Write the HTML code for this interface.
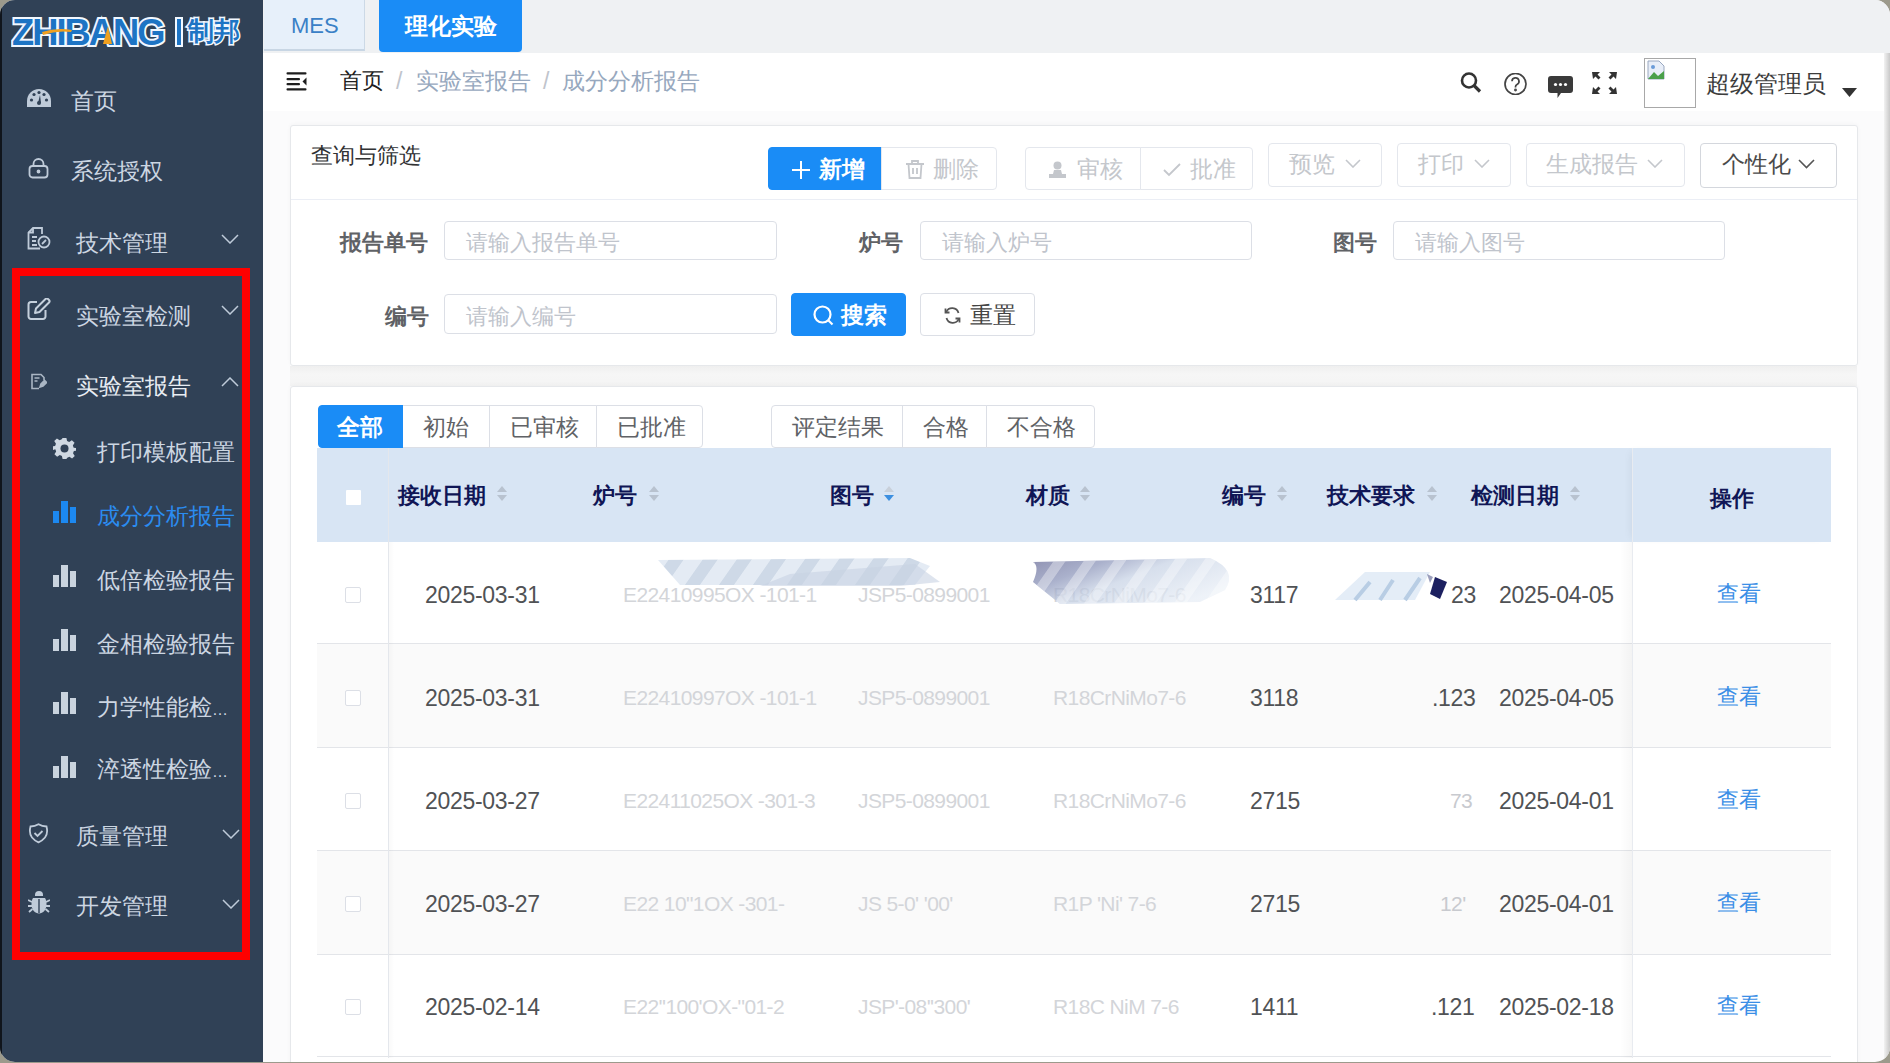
<!DOCTYPE html>
<html><head><meta charset="utf-8">
<style>
*{box-sizing:border-box;margin:0;padding:0}
html,body{width:1890px;height:1063px;overflow:hidden;background:#9c9a8c;font-family:"Liberation Sans",sans-serif;line-height:1}
.a{position:absolute;white-space:nowrap}
#win{position:absolute;left:0;top:0;width:1890px;height:1062px;border-radius:15px;overflow:hidden;background:#fbfbfc}
#side{position:absolute;left:0;top:0;width:263px;height:1063px;background:#304156}
.mi{position:absolute;font-size:23px;color:#ccd6e2;line-height:1;font-weight:500}
.ic{position:absolute}
#topbar{position:absolute;left:263px;top:0;width:1627px;height:53px;background:#eff1f3}
#hdr{position:absolute;left:263px;top:53px;width:1627px;height:58px;background:#fff}
.card{position:absolute;background:#fff;border:1px solid #e6e8eb;border-radius:3px;box-shadow:0 -1px 4px rgba(0,0,0,.03)}
.btn{position:absolute;border:1px solid #e4e7ed;background:#fff;color:#c0c4cc;font-size:22px;line-height:1}
.lbl{position:absolute;font-size:22px;font-weight:bold;color:#606266}
.inp{position:absolute;border:1px solid #dcdfe6;border-radius:4px;background:#fff}
.ph{position:absolute;font-size:22px;color:#c0c4cc}
.tab{position:absolute;top:405px;height:43px;border:1px solid #dcdfe6;background:#fff;font-size:22.5px;color:#606266}
.th{position:absolute;margin-top:2px;font-size:22px;font-weight:bold;color:#101656}
.td{position:absolute;font-size:23px;letter-spacing:-0.3px;color:#505255}
.tb{position:absolute;font-size:21px;letter-spacing:-0.6px;color:#d3d5d9}
.cb{position:absolute;width:16px;height:16px;border:1px solid #dcdfe6;border-radius:2px;background:#fff}
.row{position:absolute;left:317px;width:1514px;border-bottom:1px solid #e3e5e9}
.view{position:absolute;font-size:22px;color:#3a8ee6}
</style></head><body>
<div id="win">
  <!-- sidebar -->
  <div id="side">
    <div class="a" style="left:0;top:0;width:2px;height:1063px;background:#10151c"></div>
    <!-- logo -->
    <div class="a" id="logo" style="left:12px;top:14px;height:34px;">
      <span style="position:absolute;left:0;top:0;font-size:37px;font-weight:bold;color:#1d74c4;-webkit-text-stroke:4px #f2f8ff;paint-order:stroke fill;letter-spacing:-2px;transform:scaleX(0.98);transform-origin:0 0;font-family:'Liberation Sans Narrow','Liberation Sans',sans-serif">ZHIBANG</span>
      <span style="position:absolute;left:165px;top:5px;width:4px;height:26px;background:#1d74c4;outline:2px solid #f2f8ff"></span>
      <span style="position:absolute;left:176px;top:4px;font-size:26px;font-weight:900;color:#1d74c4;-webkit-text-stroke:3px #f2f8ff;paint-order:stroke fill">制邦</span>
      <svg style="position:absolute;left:88px;top:12px" width="12" height="18" viewBox="0 0 12 18"><path d="M8 0 L12 18 L3 18Z" fill="#f0a020"/></svg>
      <svg style="position:absolute;left:30px;top:13px" width="30" height="8" viewBox="0 0 30 8"><path d="M0 5 Q15 0 30 3 L29 5 Q15 3 1 8Z" fill="#f0a020"/></svg>
    </div>
    <!-- menu -->
    <svg class="ic" style="left:27px;top:89px" width="24" height="18" viewBox="0 0 24 18"><path d="M12 0C5.4 0 0 5.4 0 12v6h24v-6C24 5.4 18.6 0 12 0z" fill="#bfcbd9"/><circle cx="4.5" cy="11" r="1.6" fill="#304156"/><circle cx="7" cy="5.5" r="1.6" fill="#304156"/><circle cx="12" cy="3.5" r="1.6" fill="#304156"/><circle cx="17" cy="5.5" r="1.6" fill="#304156"/><circle cx="19.5" cy="11" r="1.6" fill="#304156"/><path d="M11 14l2-8 1 8z" fill="#304156"/><circle cx="12" cy="14" r="2" fill="#304156"/></svg>
    <div class="mi" style="left:71px;top:90px">首页</div>
    <svg class="ic" style="left:28px;top:158px" width="21" height="21" viewBox="0 0 21 21" fill="none" stroke="#bfcbd9" stroke-width="1.8"><path d="M5.5 8V6a5 5 0 0 1 10 0v2"/><rect x="1.5" y="8" width="18" height="11.5" rx="3"/><circle cx="10.5" cy="13.5" r="1" fill="#bfcbd9"/></svg>
    <div class="mi" style="left:71px;top:160px">系统授权</div>
    <svg class="ic" style="left:27px;top:227px" width="24" height="23" viewBox="0 0 24 23" fill="none" stroke="#bfcbd9" stroke-width="1.8"><path d="M13 21.5H1.5V5.5L6 1h9v6"/><path d="M6 1v4.5H1.5"/><path d="M5 10h5M5 14h4M5 18h5"/><circle cx="17" cy="15" r="5.5"/><path d="M15 17l4-4"/></svg>
    <div class="mi" style="left:76px;top:232px">技术管理</div>
    <svg class="ic" style="left:221px;top:234px" width="18" height="10" viewBox="0 0 18 10" fill="none" stroke="#bfcbd9" stroke-width="1.5"><path d="M1 1l8 8 8-8"/></svg>

    <svg class="ic" style="left:27px;top:298px" width="24" height="23" viewBox="0 0 24 23" fill="none" stroke="#c5d0dc" stroke-width="2" stroke-linejoin="round"><path d="M10 4H4a2.5 2.5 0 0 0-2.5 2.5v12A2.5 2.5 0 0 0 4 21h12a2.5 2.5 0 0 0 2.5-2.5V12"/><path d="M8 15l1-4.5L18.5 1a1.8 1.8 0 0 1 2.5 0l1 1a1.8 1.8 0 0 1 0 2.5L12.5 14z"/></svg>
    <div class="mi" style="left:76px;top:305px">实验室检测</div>
    <svg class="ic" style="left:221px;top:305px" width="18" height="10" viewBox="0 0 18 10" fill="none" stroke="#bfcbd9" stroke-width="1.5"><path d="M1 1l8 8 8-8"/></svg>

    <svg class="ic" style="left:31px;top:373px" width="16" height="17" viewBox="0 0 16 17" fill="none" stroke="#aab6c4" stroke-width="1.6"><path d="M8 15.5H1v-14h9l3 3V7"/><path d="M3.5 5h5M3.5 8h3"/><path d="M9 14l1-3 3.5-3.5 2 2L12 13z" fill="#aab6c4"/></svg>
    <div class="mi" style="left:76px;top:375px;color:#e8edf3">实验室报告</div>
    <svg class="ic" style="left:221px;top:377px" width="18" height="10" viewBox="0 0 18 10" fill="none" stroke="#bfcbd9" stroke-width="1.5"><path d="M1 9l8-8 8 8"/></svg>

    <svg class="ic" style="left:53px;top:437px" width="23" height="23" viewBox="0 0 24 24"><path fill="#cfd8e2" d="M10 1h4l.7 3.2 2.2.9 2.8-1.8 2.8 2.8-1.8 2.8.9 2.2L25 11.8v.4V14l-3.2.7-.9 2.2 1.8 2.8-2.8 2.8-2.8-1.8-2.2.9L14 23h-4l-.7-3.2-2.2-.9-2.8 1.8-2.8-2.8 1.8-2.8-.9-2.2L-1 14v-4l3.2-.7.9-2.2L1.3 4.3l2.8-2.8 2.8 1.8 2.2-.9z"/><circle cx="12" cy="12" r="4.2" fill="#304156"/></svg>
    <div class="mi" style="left:97px;top:441px">打印模板配置</div>

    <svg class="ic" style="left:53px;top:501px" width="23" height="22" viewBox="0 0 23 22"><rect x="0" y="10" width="6" height="12" fill="#1c88f0"/><rect x="8" y="0" width="7" height="22" fill="#1c88f0"/><rect x="17" y="6" width="6" height="16" fill="#1c88f0"/></svg>
    <div class="mi" style="left:97px;top:505px;color:#2b8cf0">成分分析报告</div>

    <svg class="ic" style="left:53px;top:565px" width="23" height="22" viewBox="0 0 23 22"><rect x="0" y="10" width="6" height="12" fill="#c9d3de"/><rect x="8" y="0" width="7" height="22" fill="#c9d3de"/><rect x="17" y="6" width="6" height="16" fill="#c9d3de"/></svg>
    <div class="mi" style="left:97px;top:569px">低倍检验报告</div>

    <svg class="ic" style="left:53px;top:629px" width="23" height="22" viewBox="0 0 23 22"><rect x="0" y="10" width="6" height="12" fill="#c9d3de"/><rect x="8" y="0" width="7" height="22" fill="#c9d3de"/><rect x="17" y="6" width="6" height="16" fill="#c9d3de"/></svg>
    <div class="mi" style="left:97px;top:633px">金相检验报告</div>

    <svg class="ic" style="left:53px;top:692px" width="23" height="22" viewBox="0 0 23 22"><rect x="0" y="10" width="6" height="12" fill="#c9d3de"/><rect x="8" y="0" width="7" height="22" fill="#c9d3de"/><rect x="17" y="6" width="6" height="16" fill="#c9d3de"/></svg>
    <div class="mi" style="left:97px;top:696px">力学性能检<span style="font-size:16px;letter-spacing:-1px">…</span></div>

    <svg class="ic" style="left:53px;top:756px" width="23" height="22" viewBox="0 0 23 22"><rect x="0" y="10" width="6" height="12" fill="#c9d3de"/><rect x="8" y="0" width="7" height="22" fill="#c9d3de"/><rect x="17" y="6" width="6" height="16" fill="#c9d3de"/></svg>
    <div class="mi" style="left:97px;top:758px">淬透性检验<span style="font-size:16px;letter-spacing:-1px">…</span></div>

    <svg class="ic" style="left:28px;top:823px" width="21" height="21" viewBox="0 0 21 21" fill="none" stroke="#bfcbd9" stroke-width="1.8"><path d="M10.5 1.2C8 2.8 5 3.5 2.5 3.5c-1 4-1 8 1.5 11 2 2.5 4.5 4 6.5 4.8 2-.8 4.5-2.3 6.5-4.8 2.5-3 2.5-7 1.5-11-2.5 0-5.5-.7-8-2.3z"/><path d="M6.5 10l3 3 5-5"/></svg>
    <div class="mi" style="left:76px;top:825px">质量管理</div>
    <svg class="ic" style="left:222px;top:829px" width="18" height="10" viewBox="0 0 18 10" fill="none" stroke="#bfcbd9" stroke-width="1.5"><path d="M1 1l8 8 8-8"/></svg>

    <svg class="ic" style="left:28px;top:891px" width="22" height="23" viewBox="0 0 22 23"><path fill="#bfcbd9" d="M7 4a4 4 0 0 1 8 0v1H7z"/><path fill="#bfcbd9" d="M5 7h12c1.2 2 1.5 4 1.5 6.5 0 5-3.4 9-7.5 9s-7.5-4-7.5-9C3.5 11 3.8 9 5 7z"/><path d="M11 8v14" stroke="#304156" stroke-width="1.4"/><path d="M0 9l4 2M22 9l-4 2M0 15h4M22 15h-4M1 21l3.5-3M21 21l-3.5-3" stroke="#bfcbd9" stroke-width="1.8"/></svg>
    <div class="mi" style="left:76px;top:895px">开发管理</div>
    <svg class="ic" style="left:222px;top:899px" width="18" height="10" viewBox="0 0 18 10" fill="none" stroke="#bfcbd9" stroke-width="1.5"><path d="M1 1l8 8 8-8"/></svg>

    <!-- red highlight box -->
    <div class="a" style="left:12px;top:268px;width:238px;height:692px;border:8px solid #fe0000"></div>
  </div>
  <!-- top bar -->
  <div id="topbar"></div>
  <div class="a" style="left:264px;top:0;width:101px;height:51px;background:#e7f0fa;border-right:1px solid #ccd9e6;border-bottom:2px solid #c8d6e4"></div>
  <div class="a" style="left:291px;top:15px;font-size:22px;color:#3a80c6">MES</div>
  <div class="a" style="left:379px;top:0;width:143px;height:52px;background:#1a8cf6;border-radius:0 0 4px 4px"></div>
  <div class="a" style="left:405px;top:15px;font-size:23px;color:#fff;font-weight:bold">理化实验</div>
  <div id="hdr"></div>
  <!-- hamburger -->
  <svg class="ic" style="left:286px;top:72px" width="22" height="19" viewBox="0 0 22 19"><rect x="0.5" y="0.3" width="20" height="2.2" rx="1" fill="#1e1e1e"/><rect x="0.5" y="6" width="13.5" height="2.2" rx="1" fill="#1e1e1e"/><rect x="0.5" y="11" width="13.5" height="2.2" rx="1" fill="#1e1e1e"/><rect x="0.5" y="16.3" width="20" height="2.2" rx="1" fill="#1e1e1e"/><path d="M20.5 5.5v8l-4-4z" fill="#1e1e1e"/></svg>
  <div class="a" style="left:340px;top:70px;font-size:22px;color:#202020">首页</div>
  <div class="a" style="left:396px;top:70px;font-size:23px;color:#c0c4cc">/</div>
  <div class="a" style="left:416px;top:71px;font-size:22.5px;color:#97a8be">实验室报告</div>
  <div class="a" style="left:543px;top:70px;font-size:23px;color:#c0c4cc">/</div>
  <div class="a" style="left:562px;top:71px;font-size:22.5px;color:#97a8be">成分分析报告</div>
  <!-- right icons -->
  <svg class="ic" style="left:1460px;top:72px" width="24" height="21" viewBox="0 0 24 21" fill="none" stroke="#333" stroke-width="2.6"><circle cx="9" cy="8.5" r="7"/><path d="M14 13.5l6 6" stroke-width="3.2"/></svg>
  <svg class="ic" style="left:1503px;top:73px" width="25" height="22" viewBox="0 0 25 22" fill="none" stroke="#444" stroke-width="1.7"><circle cx="12.5" cy="11" r="10.5"/><path d="M9 8.3a3.5 3.5 0 1 1 5 3.2c-1 .5-1.5 1.1-1.5 2.3v.8"/><circle cx="12.5" cy="17" r=".6" fill="#444"/></svg>
  <svg class="ic" style="left:1548px;top:76px" width="25" height="23" viewBox="0 0 25 23"><path d="M3 0h19a3 3 0 0 1 3 3v11a3 3 0 0 1-3 3H13l-3.5 5V17H3a3 3 0 0 1-3-3V3a3 3 0 0 1 3-3z" fill="#3a3a3a"/><circle cx="7.5" cy="8.5" r="1.6" fill="#fff"/><circle cx="12.5" cy="8.5" r="1.6" fill="#fff"/><circle cx="17.5" cy="8.5" r="1.6" fill="#fff"/></svg>
  <svg class="ic" style="left:1592px;top:72px" width="25" height="22" viewBox="0 0 25 22" fill="#333"><path d="M0 0h8L5.5 2.5l3 3-2 2-3-3L1 7z"/><path d="M25 0h-8l2.5 2.5-3 3 2 2 3-3L24 7z"/><path d="M0 22h8l-2.5-2.5 3-3-2-2-3 3L1 15z"/><path d="M25 22h-8l2.5-2.5-3-3 2-2 3 3 2.5-2.5z"/></svg>
  <div class="a" style="left:1644px;top:58px;width:52px;height:50px;border:1px solid #a8a8a8;background:#fff"></div>
  <svg class="ic" style="left:1647px;top:60px" width="18" height="20" viewBox="0 0 18 20"><path d="M1 1h11l5 5v13H1z" fill="#e8eef8" stroke="#9aa8c0" stroke-width="1"/><path d="M1 19l6-7 4 4 6-5v8z" fill="#4aa04a"/><circle cx="6" cy="7" r="2" fill="#6a9bd8"/></svg>
  <div class="a" style="left:1706px;top:72px;font-size:24px;color:#3c3c3c">超级管理员</div>
  <svg class="ic" style="left:1842px;top:88px" width="15" height="9" viewBox="0 0 15 9"><path d="M0 0h15L7.5 9z" fill="#333"/></svg>
  <div class="a" style="left:1884px;top:53px;width:6px;height:1010px;background:linear-gradient(90deg,#f2f2f2,#c9c9c9)"></div>
  <!-- cards -->
  <div class="card" style="left:290px;top:125px;width:1568px;height:241px"></div>
  <div class="a" style="left:311px;top:145px;font-size:22px;color:#303133">查询与筛选</div>
  <div class="a" style="left:291px;top:199px;width:1566px;height:1px;background:#ebeef5"></div>
  <!-- toolbar buttons -->
  <div class="btn" style="left:768px;top:147px;width:114px;height:43px;background:#1a8cf6;border-color:#1a8cf6;border-radius:4px 0 0 4px"></div>
  <svg class="ic" style="left:792px;top:161px" width="18" height="18" viewBox="0 0 18 18" stroke="#fff" stroke-width="2"><path d="M9 0v18M0 9h18"/></svg>
  <div class="a" style="left:819px;top:159px;font-size:22.5px;color:#fff;font-weight:bold">新增</div>
  <div class="btn" style="left:881px;top:147px;width:116px;height:43px;border-radius:0 4px 4px 0"></div>
  <svg class="ic" style="left:906px;top:160px" width="18" height="19" viewBox="0 0 18 19" fill="none" stroke="#c4c7cc" stroke-width="1.8"><path d="M0 4h18M6 4V1h6v3M2.5 4l1 14h11l1-14M7 8v6M11 8v6"/></svg>
  <div class="a" style="left:933px;top:159px;font-size:22.5px;color:#c4c7cc">删除</div>
  <div class="btn" style="left:1025px;top:147px;width:116px;height:43px;border-radius:4px 0 0 4px"></div>
  <svg class="ic" style="left:1049px;top:161px" width="17" height="17" viewBox="0 0 17 17" fill="#c4c7cc"><circle cx="8.5" cy="4.5" r="4"/><path d="M5 9h7l1 4h4v4H0v-4h4z"/></svg>
  <div class="a" style="left:1077px;top:159px;font-size:22.5px;color:#c4c7cc">审核</div>
  <div class="btn" style="left:1140px;top:147px;width:113px;height:43px;border-radius:0 4px 4px 0"></div>
  <svg class="ic" style="left:1163px;top:163px" width="18" height="14" viewBox="0 0 18 14" fill="none" stroke="#c4c7cc" stroke-width="1.8"><path d="M1 7l5 5L17 1"/></svg>
  <div class="a" style="left:1190px;top:159px;font-size:22.5px;color:#c4c7cc">批准</div>

  <div class="btn" style="left:1268px;top:143px;width:114px;height:44px;border-radius:4px"></div>
  <div class="a" style="left:1289px;top:154px;font-size:22.5px;color:#c4c7cc">预览</div>
  <svg class="ic" style="left:1345px;top:159px" width="16" height="9" viewBox="0 0 16 9" fill="none" stroke="#c4c7cc" stroke-width="1.6"><path d="M1 1l7 7 7-7"/></svg>
  <div class="btn" style="left:1397px;top:143px;width:114px;height:44px;border-radius:4px"></div>
  <div class="a" style="left:1418px;top:154px;font-size:22.5px;color:#c4c7cc">打印</div>
  <svg class="ic" style="left:1474px;top:159px" width="16" height="9" viewBox="0 0 16 9" fill="none" stroke="#c4c7cc" stroke-width="1.6"><path d="M1 1l7 7 7-7"/></svg>
  <div class="btn" style="left:1526px;top:143px;width:159px;height:44px;border-radius:4px"></div>
  <div class="a" style="left:1546px;top:154px;font-size:22.5px;color:#c4c7cc">生成报告</div>
  <svg class="ic" style="left:1647px;top:159px" width="16" height="9" viewBox="0 0 16 9" fill="none" stroke="#c4c7cc" stroke-width="1.6"><path d="M1 1l7 7 7-7"/></svg>
  <div class="btn" style="left:1700px;top:143px;width:137px;height:45px;border-radius:4px;border-color:#d4d7dd"></div>
  <div class="a" style="left:1722px;top:154px;font-size:22.5px;color:#4a4a4a">个性化</div>
  <svg class="ic" style="left:1798px;top:159px" width="17" height="10" viewBox="0 0 17 10" fill="none" stroke="#555" stroke-width="1.6"><path d="M1 1l7.5 7.5L16 1"/></svg>

  <!-- form -->
  <div class="lbl" style="left:340px;top:232px">报告单号</div>
  <div class="inp" style="left:444px;top:221px;width:333px;height:39px"></div>
  <div class="ph" style="left:466px;top:232px">请输入报告单号</div>
  <div class="lbl" style="left:859px;top:232px">炉号</div>
  <div class="inp" style="left:920px;top:221px;width:332px;height:39px"></div>
  <div class="ph" style="left:942px;top:232px">请输入炉号</div>
  <div class="lbl" style="left:1333px;top:232px">图号</div>
  <div class="inp" style="left:1393px;top:221px;width:332px;height:39px"></div>
  <div class="ph" style="left:1415px;top:232px">请输入图号</div>
  <div class="lbl" style="left:385px;top:306px">编号</div>
  <div class="inp" style="left:444px;top:294px;width:333px;height:40px"></div>
  <div class="ph" style="left:466px;top:306px">请输入编号</div>
  <div class="btn" style="left:791px;top:293px;width:115px;height:43px;background:#1a8cf6;border-color:#1a8cf6;border-radius:4px"></div>
  <svg class="ic" style="left:813px;top:305px" width="21" height="21" viewBox="0 0 21 21" fill="none" stroke="#fff" stroke-width="2.2"><circle cx="9.5" cy="9.5" r="8"/><path d="M15.5 15.5l4 4"/></svg>
  <div class="a" style="left:841px;top:305px;font-size:22.5px;color:#fff;font-weight:bold">搜索</div>
  <div class="btn" style="left:920px;top:293px;width:115px;height:43px;border-radius:4px;border-color:#dcdfe6"></div>
  <svg class="ic" style="left:944px;top:307px" width="17" height="17" viewBox="0 0 17 17" fill="none" stroke="#555" stroke-width="1.8"><path d="M14.5 6A6.5 6.5 0 0 0 2.3 5"/><path d="M2.5 11a6.5 6.5 0 0 0 12.2 1"/><path d="M1.5 1.5v4h4" /><path d="M15.5 15.5v-4h-4"/></svg>
  <div class="a" style="left:970px;top:305px;font-size:22.5px;color:#444">重置</div>

  <div class="a" style="left:290px;top:366px;width:1567px;height:20px;background:linear-gradient(#efefef,#f6f6f6 40%,#f4f4f4)"></div>
  <div class="card" style="left:290px;top:386px;width:1568px;height:700px"></div>
  <!-- tabs -->
  <div class="tab" style="left:318px;width:86px;background:#1a8cf6;border-color:#1a8cf6;border-radius:4px 0 0 4px"></div>
  <div class="a" style="left:337px;top:417px;font-size:22.5px;color:#fff;font-weight:bold">全部</div>
  <div class="tab" style="left:403px;width:87px;border-left:none"></div>
  <div class="a" style="left:423px;top:417px;font-size:22.5px;color:#606266">初始</div>
  <div class="tab" style="left:489px;width:108px"></div>
  <div class="a" style="left:510px;top:417px;font-size:22.5px;color:#606266">已审核</div>
  <div class="tab" style="left:596px;width:107px;border-radius:0 4px 4px 0"></div>
  <div class="a" style="left:617px;top:417px;font-size:22.5px;color:#606266">已批准</div>
  <div class="tab" style="left:771px;width:132px;border-radius:4px 0 0 4px"></div>
  <div class="a" style="left:792px;top:417px;font-size:22.5px;color:#606266">评定结果</div>
  <div class="tab" style="left:902px;width:85px"></div>
  <div class="a" style="left:923px;top:417px;font-size:22.5px;color:#606266">合格</div>
  <div class="tab" style="left:986px;width:109px;border-radius:0 4px 4px 0"></div>
  <div class="a" style="left:1007px;top:417px;font-size:22.5px;color:#606266">不合格</div>

  <!-- table -->
  <div class="a" style="left:317px;top:448px;width:1514px;height:94px;background:#d8e5f4"></div>
  <div class="a" style="left:346px;top:490px;width:15px;height:15px;background:#fff;border-radius:1px"></div>
  <div class="th" style="left:398px;top:483px">接收日期</div>
  <div class="th" style="left:593px;top:483px">炉号</div>
  <div class="th" style="left:830px;top:483px">图号</div>
  <div class="th" style="left:1026px;top:483px">材质</div>
  <div class="th" style="left:1222px;top:483px">编号</div>
  <div class="th" style="left:1327px;top:483px">技术要求</div>
  <div class="th" style="left:1471px;top:483px">检测日期</div>
  <!-- sort icons -->
  <svg class="ic" style="left:496px;top:486px" width="12" height="15" viewBox="0 0 12 15"><path d="M6 0l5 6H1z" fill="#b8c2cf"/><path d="M6 15l5-6H1z" fill="#b8c2cf"/></svg>
  <svg class="ic" style="left:648px;top:486px" width="12" height="15" viewBox="0 0 12 15"><path d="M6 0l5 6H1z" fill="#b8c2cf"/><path d="M6 15l5-6H1z" fill="#b8c2cf"/></svg>
  <svg class="ic" style="left:883px;top:486px" width="12" height="15" viewBox="0 0 12 15"><path d="M6 0l5 6H1z" fill="#c8d0da"/><path d="M6 15l5-6H1z" fill="#3c8fe0"/></svg>
  <svg class="ic" style="left:1079px;top:486px" width="12" height="15" viewBox="0 0 12 15"><path d="M6 0l5 6H1z" fill="#b8c2cf"/><path d="M6 15l5-6H1z" fill="#b8c2cf"/></svg>
  <svg class="ic" style="left:1276px;top:486px" width="12" height="15" viewBox="0 0 12 15"><path d="M6 0l5 6H1z" fill="#b8c2cf"/><path d="M6 15l5-6H1z" fill="#b8c2cf"/></svg>
  <svg class="ic" style="left:1426px;top:486px" width="12" height="15" viewBox="0 0 12 15"><path d="M6 0l5 6H1z" fill="#b8c2cf"/><path d="M6 15l5-6H1z" fill="#b8c2cf"/></svg>
  <svg class="ic" style="left:1569px;top:486px" width="12" height="15" viewBox="0 0 12 15"><path d="M6 0l5 6H1z" fill="#b8c2cf"/><path d="M6 15l5-6H1z" fill="#b8c2cf"/></svg>

  <!-- rows -->
  <div class="row" style="top:542px;height:102px;background:#fff"></div>
  <div class="row" style="top:644px;height:104px;background:#fafafa"></div>
  <div class="row" style="top:748px;height:103px;background:#fff"></div>
  <div class="row" style="top:851px;height:104px;background:#fafafa"></div>
  <div class="row" style="top:955px;height:102px;background:#fff"></div>
  <!-- fixed columns -->
  <div class="a" style="left:388px;top:448px;width:1px;height:610px;background:#e4e7ec"></div>
  <div class="a" style="left:389px;top:542px;width:5px;height:516px;background:linear-gradient(90deg,rgba(0,0,0,.025),rgba(0,0,0,0))"></div>
  <div class="a" style="left:317px;top:542px;width:72px;height:516px;"></div>
  <div class="a" style="left:1633px;top:448px;width:198px;height:94px;background:#d8e5f4;box-shadow:-6px 0 8px -4px rgba(0,0,0,.06)"></div>
  <div class="a" style="left:1620px;top:542px;width:13px;height:516px;background:linear-gradient(90deg,rgba(0,0,0,0),rgba(0,0,0,.03))"></div>
  <div class="a" style="left:1632px;top:448px;width:1px;height:610px;background:#e8ebf0"></div>
  <div class="th" style="left:1710px;top:486px">操作</div>

  <div class="cb" style="left:345px;top:587px"></div>
  <div class="td" style="left:425px;top:584px">2025-03-31</div>
  <div class="tb" style="left:623px;top:584px">E22410995OX -101-1</div>
  <div class="tb" style="left:858px;top:584px">JSP5-0899001</div>
  <div class="tb" style="left:1053px;top:584px">R18CrNiMo7-6</div>
  <div class="td" style="left:1250px;top:584px">3117</div>
  <div class="td" style="left:1451px;top:584px">23</div>
  <div class="td" style="left:1499px;top:584px">2025-04-05</div>
  <div class="view" style="left:1717px;top:583px">查看</div>

  <div class="cb" style="left:345px;top:690px"></div>
  <div class="td" style="left:425px;top:687px">2025-03-31</div>
  <div class="tb" style="left:623px;top:687px">E22410997OX -101-1</div>
  <div class="tb" style="left:858px;top:687px">JSP5-0899001</div>
  <div class="tb" style="left:1053px;top:687px">R18CrNiMo7-6</div>
  <div class="td" style="left:1250px;top:687px">3118</div>
  <div class="td" style="left:1432px;top:687px">.123</div>
  <div class="td" style="left:1499px;top:687px">2025-04-05</div>
  <div class="view" style="left:1717px;top:686px">查看</div>

  <div class="cb" style="left:345px;top:793px"></div>
  <div class="td" style="left:425px;top:790px">2025-03-27</div>
  <div class="tb" style="left:623px;top:790px">E22411025OX -301-3</div>
  <div class="tb" style="left:858px;top:790px">JSP5-0899001</div>
  <div class="tb" style="left:1053px;top:790px">R18CrNiMo7-6</div>
  <div class="td" style="left:1250px;top:790px">2715</div>
  <div class="tb" style="left:1450px;top:790px;color:#c8cacf">73</div>
  <div class="td" style="left:1499px;top:790px">2025-04-01</div>
  <div class="view" style="left:1717px;top:789px">查看</div>

  <div class="cb" style="left:345px;top:896px"></div>
  <div class="td" style="left:425px;top:893px">2025-03-27</div>
  <div class="tb" style="left:623px;top:893px">E22 10"1OX -301-</div>
  <div class="tb" style="left:858px;top:893px">JS 5-0' '00'</div>
  <div class="tb" style="left:1053px;top:893px">R1P 'Ni' 7-6</div>
  <div class="td" style="left:1250px;top:893px">2715</div>
  <div class="tb" style="left:1440px;top:893px;color:#c8cacf">12'</div>
  <div class="td" style="left:1499px;top:893px">2025-04-01</div>
  <div class="view" style="left:1717px;top:892px">查看</div>

  <div class="cb" style="left:345px;top:999px"></div>
  <div class="td" style="left:425px;top:996px">2025-02-14</div>
  <div class="tb" style="left:623px;top:996px">E22''100'OX-"01-2</div>
  <div class="tb" style="left:858px;top:996px">JSP'-08''300'</div>
  <div class="tb" style="left:1053px;top:996px">R18C NiM 7-6</div>
  <div class="td" style="left:1250px;top:996px">1411</div>
  <div class="td" style="left:1431px;top:996px">.121</div>
  <div class="td" style="left:1499px;top:996px">2025-02-18</div>
  <div class="view" style="left:1717px;top:995px">查看</div>
  <!-- smears (privacy scribbles) -->
  <svg class="ic" style="left:640px;top:552px" width="600" height="56" viewBox="0 0 600 56">
    <defs>
      <pattern id="st1" width="34" height="56" patternUnits="userSpaceOnUse" patternTransform="skewX(-35)">
        <rect width="34" height="56" fill="#d9e3ef"/><rect width="15" height="56" fill="#b9c9dd"/>
      </pattern>
      <linearGradient id="g2" x1="0" x2="1" y1="0" y2="0.6"><stop offset="0" stop-color="#6a6d98"/><stop offset=".3" stop-color="#8e97bb"/><stop offset=".55" stop-color="#c9d4e6"/><stop offset="1" stop-color="#e8eef6"/></linearGradient>
      <pattern id="st2" width="30" height="56" patternUnits="userSpaceOnUse" patternTransform="skewX(-35)">
        <rect width="30" height="56" fill="rgba(255,255,255,0)"/><rect width="12" height="56" fill="rgba(255,255,255,.35)"/>
      </pattern>
    </defs>
    <path d="M18 8 L270 6 L290 14 L275 33 L40 33 Z" fill="url(#st1)" opacity=".7"/>
    <path d="M150 22 L275 12 L300 30 L260 34 L120 34 Z" fill="#c8d2e2" opacity=".6"/>
    <path d="M393 10 L570 6 Q598 18 585 38 L560 50 L420 52 L393 30 Q400 14 393 10Z" fill="url(#g2)" opacity=".75"/>
    <path d="M393 10 L570 6 Q598 18 585 38 L560 50 L420 52 L393 30 Q400 14 393 10Z" fill="url(#st2)"/>
  </svg>
  <svg class="ic" style="left:1335px;top:570px" width="115" height="34" viewBox="0 0 115 34">
    <path d="M0 30 L30 2 L95 2 L80 30Z" fill="#dde9f5" opacity=".8"/>
    <path d="M20 30L35 12M45 30L58 10M70 30L85 8" stroke="#b8cde4" stroke-width="4"/>
    <path d="M100 7 L112 12 L105 29 L95 24Z" fill="#1c2060"/><path d="M92 4l6 3-3 6z" fill="#5a5f90" opacity=".6"/>
  </svg>
</div>
</body></html>
